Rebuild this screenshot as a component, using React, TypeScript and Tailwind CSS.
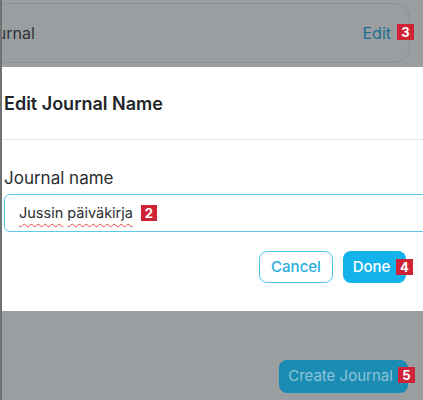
const Badge = ({ n, className }: { n: string; className: string }) => (
  <span
    className={`absolute flex h-[16px] w-[17px] items-center justify-center bg-[#cf2338] text-[13px] font-bold leading-none text-white ${className}`}
  >
    {n}
  </span>
);

export default function App() {
  return (
    <div
      className="relative flex h-[400px] w-[423px] flex-col overflow-hidden border-l-2 border-[#6e7275] bg-[#9a9ea1] text-[#2f3234]"
      style={{ fontFamily: "Inter, 'Noto Sans', sans-serif" }}
    >
      {/* list card behind the overlay */}
      <div className="relative mt-[3px] ml-[-50px] flex h-[60px] w-[458px] shrink-0 items-center justify-between rounded-2xl border border-[#8d9194] pl-[25px] pr-[18px]">
        <span className="text-[16px]">Journal</span>
        <span className="text-[16px] text-[#1b6e93]">Edit</span>
        <Badge n="3" className="right-[-5px] top-[20px]" />
      </div>

      {/* dialog */}
      <div className="mt-[4px] ml-[-2px] h-[244px] w-[460px] shrink-0 bg-white">
        <div className="flex h-[73px] items-center border-b border-[#e4e6e8] pl-[4px]">
          <h2 className="text-[18px] font-semibold text-[#212529]">Edit Journal Name</h2>
        </div>
        <div className="pl-[4px] pt-[26px]">
          <label className="block text-[17px] leading-6 text-[#2b2e31]">Journal name</label>
          <div className="mt-[4px] flex h-[38px] items-center rounded-md border border-[#5ec9e8] pl-[14px]">
            <span className="relative flex items-center gap-[4px] text-[14.5px] text-[#2b2e31]">
              <span className="underline decoration-[#e0483e] decoration-wavy decoration-1 underline-offset-[5px]">Jussin</span>
              <span className="underline decoration-[#e0483e] decoration-wavy decoration-1 underline-offset-[5px]">päiväkirja</span>
              <span className="ml-[4px] flex h-[16px] w-[16px] items-center justify-center bg-[#cf2338] text-[13px] font-bold leading-none text-white">
                2
              </span>
            </span>
          </div>
          <div className="mt-[19px] flex justify-end gap-[10px] pr-[54px]">
            <button className="h-[32px] w-[74px] rounded-lg border border-[#4fc4ec] text-[15px] font-medium text-[#27ade0]">
              Cancel
            </button>
            <button className="relative h-[32px] w-[63px] rounded-lg bg-[#12b2ea] pr-[6px] text-[15px] font-medium text-white">
              Done
              <Badge n="4" className="right-[-7px] top-[8px]" />
            </button>
          </div>
        </div>
      </div>

      {/* page footer behind overlay */}
      <div className="mt-[49px] flex justify-end pr-[15px]">
        <button className="relative h-[33px] w-[129px] rounded-lg bg-[#1a8cb4] pr-[6px] text-[15px] text-[#8ec3d5]">
          Create Journal
          <Badge n="5" className="right-[-7px] top-[7px] w-[14px]" />
        </button>
      </div>
    </div>
  );
}
